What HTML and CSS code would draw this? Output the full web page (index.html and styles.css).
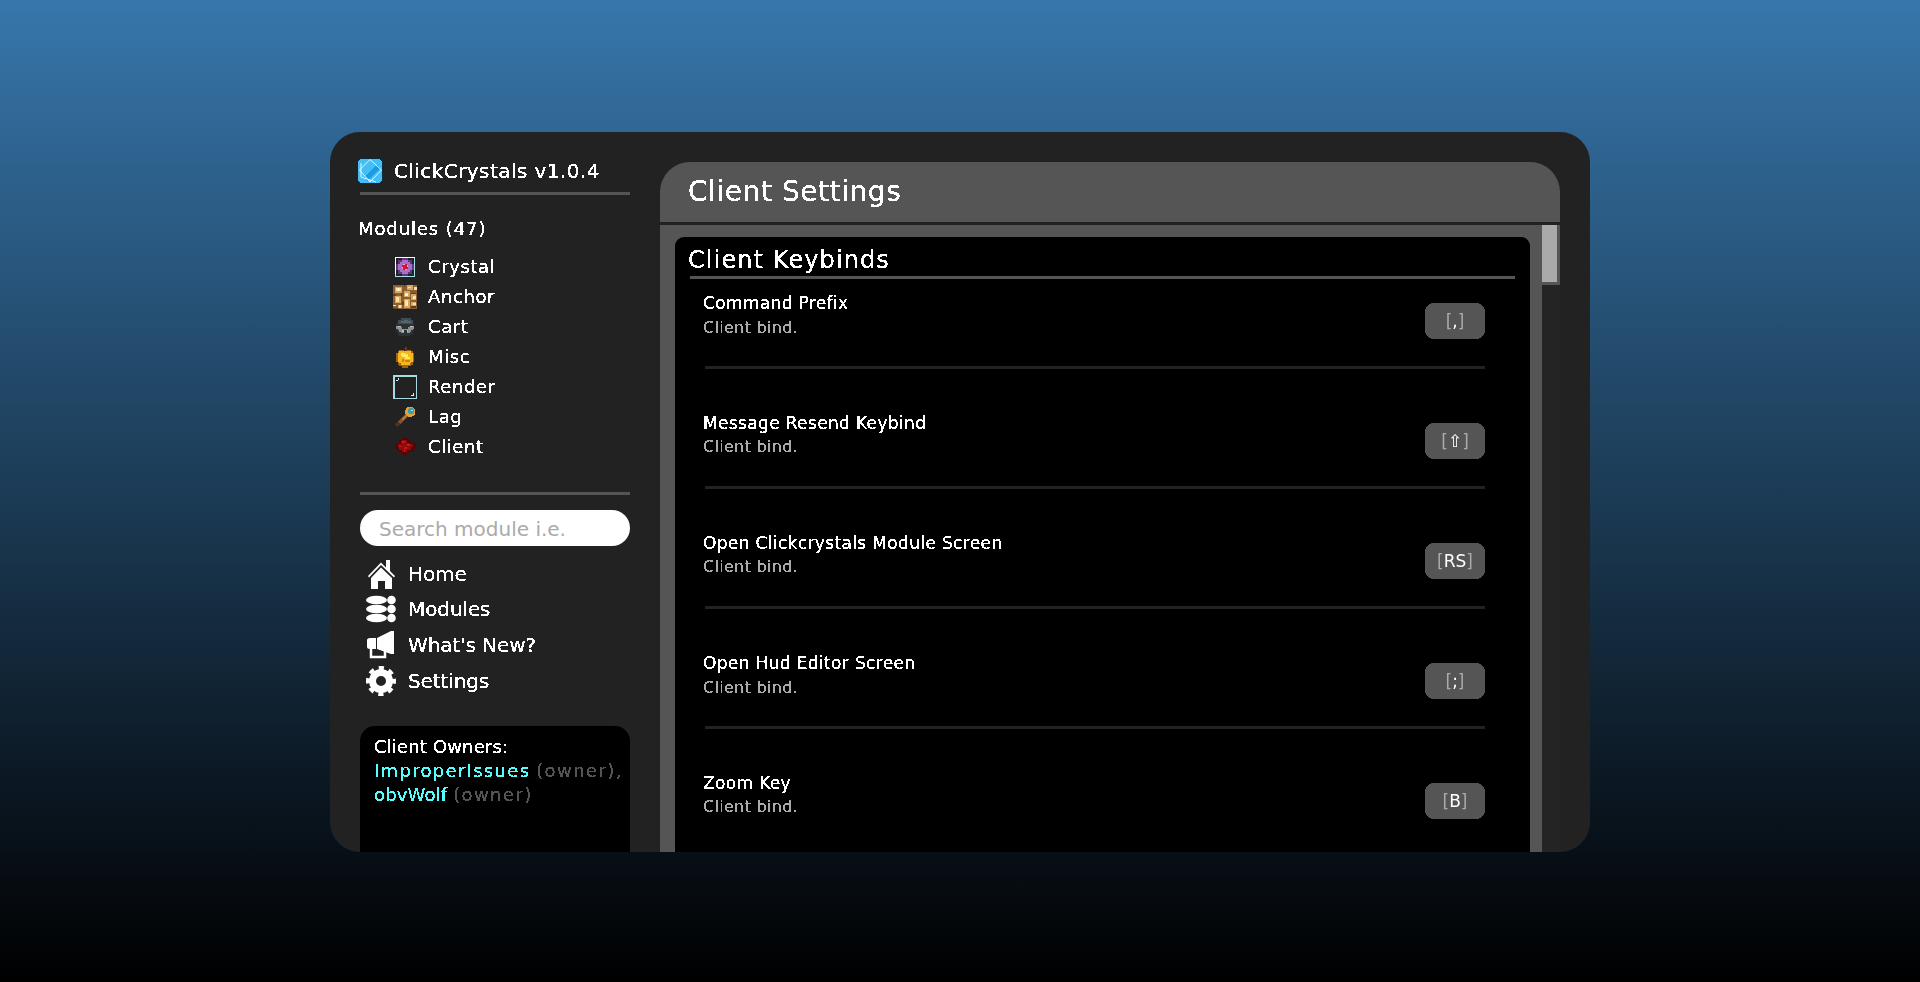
FILE: index.html
```html
<!DOCTYPE html>
<html lang="en">
<head>
    <meta charset="UTF-8">
    <meta name="viewport" content="width=device-width, initial-scale=1.0">
    <title>ClickCrystals</title>
    <link rel="stylesheet" href="styles.css">
</head>
<body>
    <!-- hard edge on the text, the original uses a bitmap font -->
    <svg class="defs" width="0" height="0">
        <filter id="crisp" color-interpolation-filters="sRGB" x="0" y="0" width="100%" height="100%">
            <feComponentTransfer>
                <feFuncA type="discrete" tableValues="0 1 1"/>
            </feComponentTransfer>
        </filter>
    </svg>

    <div class="window">
        <aside class="sidebar">
            <div class="brand">
                <svg class="logo" viewBox="0 0 26 26" shape-rendering="crispEdges">
                    <path fill="#0c2a3c" d="M2 0h22v1h1v1h1v22h-1v1h-1v1H2v-1H1v-1H0V2h1V1h1z"/>
                    <path fill="#45bdf5" d="M3 1h20v1h1v1h1v20h-1v1h-1v1H3v-1H2v-1H1V3h1V2h1z"/>
                    <path fill="#1b9ae6" d="M7 19L20 6l3 4-13 13z"/>
                    <path fill="none" stroke="#e4f8ff" stroke-width="1" shape-rendering="auto" d="M13 1.500L24.500 12 13 24 2.500 12zM4 5v14l15 5"/>
                </svg>
                <span class="brand-name">ClickCrystals v1.0.4</span>
            </div>
            <hr class="rule">

            <div class="modules-head">Modules (47)</div>
            <ul class="module-list">
                <li>
                    <svg class="module-icon" viewBox="1 1 14 14" shape-rendering="crispEdges">
                        <path fill="#5c3580" d="M6 3h4v1h2v2h1v4h-1v2h-2v1H6v-1H4v-2H3V6h1V4h2z"/>
                        <path fill="#a76fc8" d="M6 4h4v1h1v1h1v4h-1v1h-1v1H6v-1H5v-1H4V6h1V5h1z"/>
                        <path fill="#d9a6ea" d="M7 6h2v1h1v2H9v1H7V9H6V7h1z"/>
                        <path fill="#d3142c" d="M8 6h1v2h1v1H8v1H7V8H6V7h2z"/>
                        <path fill="#ffffff" d="M2 2h12v1H3v1H2z"/>
                        <path fill="#ffffff" d="M2 4h1v8H2z"/>
                        <path fill="#a9dbe4" d="M13 3h1v11H2v-2h1v1h10z"/>
                    </svg>
                    <span>Crystal</span>
                </li>
                <li>
                    <svg class="module-icon" viewBox="0 0 16 16" shape-rendering="crispEdges">
                        <rect width="16" height="16" fill="#8a5f35"/>
                        <path fill="#5e3e20" d="M0 6h2v1H0zM7 0h1v1H7zM5 5h1v2H5zM12 5h3v1h-3zM6 11h1v2H6zM12 14h3v1h-3zM0 15h3v1H0zM14 11h2v1h-2z"/>
                        <path fill="#d8a760" d="M1 1h5v4H1zM9 0h4v3H9zM7 4h4v4H7zM12 6h3v4h-3zM1 7h4v5H1zM7 9h4v6H7zM12 11h3v3h-3zM3 13h3v2H3z"/>
                        <path fill="#ffdf9e" d="M2 2h3v2H2zM10 1h2v1h-2zM8 5h2v2H8zM13 7h2v2h-2zM2 8h2v3H2zM8 10h2v4H8zM13 12h2v1h-2zM4 13h1v2H4zM14 1h2v2h-2zM0 13h2v1H0z"/>
                        <path fill="#fff8e0" d="M3 2h1v2H3zM8 6h2v1H8zM13 8h1v1h-1zM3 9h1v1H3zM9 11h1v2H9z"/>
                    </svg>
                    <span>Anchor</span>
                </li>
                <li>
                    <svg class="module-icon" viewBox="0 0 16 16" shape-rendering="crispEdges">
                        <path fill="#2b3236" d="M5 2h7v1h1v2h1v6h-1v2h-2v1H4v-1H3v-2H2V5h1V3h2z"/>
                        <path fill="#414b51" d="M5 2h7v1h1v3H3V3h2z"/>
                        <path fill="#596469" d="M7 3h3v1h2v1H5V4h2z"/>
                        <path fill="#8f8f8f" d="M2 7h3v1h1v1h4V8h1V7h3v2h-1v1h-1v1h-1v1H9v-2H7v2H5v-1H4v-1H3V9H2z"/>
                        <path fill="#bdbdbd" d="M3 7h2v1H3zM11 7h2v1h-2zM6 10h1v1H6zM9 10h1v1H9z"/>
                    </svg>
                    <span>Cart</span>
                </li>
                <li>
                    <svg class="module-icon" viewBox="0 0 16 16" shape-rendering="crispEdges">
                        <path fill="#6a3d10" d="M8 1h1v3H8z"/>
                        <path fill="#a8620f" d="M4 3h3v1h2V3h3v1h1v1h1v6h-1v2h-1v1h-2v1H6v-1H4v-1H3v-2H2V5h1V4h1z"/>
                        <path fill="#f3b81f" d="M4 4h8v1h1v6h-1v1h-1v1H5v-1H4v-1H3V5h1z"/>
                        <path fill="#ffe85e" d="M5 5h3v1h2v2h1v1H8V8H6V7H5z"/>
                        <path fill="#c98412" d="M8 10h3v1H8zM6 9h1v2H6z"/>
                    </svg>
                    <span>Misc</span>
                </li>
                <li>
                    <svg class="module-icon" viewBox="0 0 16 16" shape-rendering="crispEdges">
                        <path fill="#a9d9e2" d="M0 0h16v16H0zM1 1v14h14V1z"/>
                        <path fill="#d8f0f4" d="M2 3h1v1H2zM3 2h1v1H3zM13 12h1v2h-2v-1h1z"/>
                    </svg>
                    <span>Render</span>
                </li>
                <li>
                    <svg class="module-icon" viewBox="0 0 16 16" shape-rendering="crispEdges">
                        <path fill="none" stroke="#8a4f28" stroke-width="2.500" d="M2 14L9 7"/>
                        <path fill="none" stroke="#55301c" stroke-width="2.500" d="M2 14l2-2"/>
                        <path fill="none" stroke="#bb7334" stroke-width="1.500" d="M6 10l3-3"/>
                        <circle cx="11.500" cy="4.500" r="3.500" fill="#e0a040"/>
                        <circle cx="12" cy="4" r="2" fill="#3aa0a8"/>
                        <path fill="#9ae8e8" d="M12 3h1v1h-1z"/>
                    </svg>
                    <span>Lag</span>
                </li>
                <li>
                    <svg class="module-icon" viewBox="0 0 16 16" shape-rendering="crispEdges">
                        <path fill="#4c0808" d="M6 2h4v1h2v2h2v1h1v3h-1v2h-3v1H9v1H6v-1H4v-1H3V9H1V6h2V5h1V3h2z"/>
                        <path fill="#8e0c0c" d="M6 3h3v2h2v1h2v2h-1v2H9v1H6v-1H4V8H3V6h2V4h1z"/>
                        <path fill="#c81818" d="M6 4h2v1H6zM9 6h2v1H9zM4 7h2v1H4zM7 8h2v1H7zM7 10h1v1H7z"/>
                    </svg>
                    <span>Client</span>
                </li>
            </ul>
            <hr class="rule">

            <input class="search" type="text" placeholder="Search module i.e.">

            <nav class="nav">
                <a class="nav-item">
                    <svg class="nav-icon" viewBox="0 0 30 30">
                        <path fill="#fff" d="M20 1h4v11l5 5-1 1.500L15 6 3 18.500 2 17 15 3.500l5 5z"/>
                        <path fill="#fff" d="M15 8.500L26 19v11h-7v-8h-7v8H5V19z"/>
                    </svg>
                    <span>Home</span>
                </a>
                <a class="nav-item">
                    <svg class="nav-icon" viewBox="0 0 30 30">
                        <ellipse cx="10.500" cy="6" rx="10.500" ry="4.300" fill="#fff"/>
                        <ellipse cx="10.500" cy="15" rx="10.500" ry="4.300" fill="#fff"/>
                        <ellipse cx="10.500" cy="24" rx="10.500" ry="4.300" fill="#fff"/>
                        <circle cx="25.500" cy="6" r="4.300" fill="#fff"/>
                        <circle cx="25.500" cy="15" r="4.300" fill="#fff"/>
                        <circle cx="25.500" cy="24" r="4.300" fill="#fff"/>
                    </svg>
                    <span>Modules</span>
                </a>
                <a class="nav-item">
                    <svg class="nav-icon" viewBox="0 0 30 30">
                        <path fill="#fff" d="M11 8L25 1h3v23h-3l-14-5z"/>
                        <path fill="#fff" d="M4 8h6v11H4c-2 0-3-1-3-2v-7c0-1 1-2 3-2z"/>
                        <path fill="none" stroke="#fff" stroke-width="2.500" d="M5 19v8h14v-6"/>
                    </svg>
                    <span>What's New?</span>
                </a>
                <a class="nav-item">
                    <svg class="nav-icon" viewBox="0 0 30 30">
                        <circle cx="15" cy="15" r="8.500" fill="none" stroke="#fff" stroke-width="7"/>
                        <circle cx="15" cy="15" r="13" fill="none" stroke="#fff" stroke-width="4" stroke-dasharray="5.200 5" stroke-dashoffset="2.600"/>
                    </svg>
                    <span>Settings</span>
                </a>
            </nav>

            <div class="owners">
                <div class="owners-text">Client Owners:</div>
                <div class="owners-text"><span class="owner-name owner-long">ImproperIssues</span> <span class="owner-role">(owner),</span></div>
                <div class="owners-text"><span class="owner-name">obvWolf</span> <span class="owner-role">(owner)</span></div>
            </div>
        </aside>

        <main class="main">
            <header class="main-head">
                <h1>Client Settings</h1>
            </header>
            <div class="main-body">
                <section class="card">
                    <h2>Client Keybinds</h2>
                    <hr class="rule card-rule">

                    <div class="bind-row">
                        <div class="bind-text">
                            <div class="bind-name">Command Prefix</div>
                            <div class="bind-desc">Client bind.</div>
                        </div>
                        <button class="key"><i>[</i>,<i>]</i></button>
                    </div>
                    <div class="bind-row bind-row-tight">
                        <div class="bind-text">
                            <div class="bind-name">Message Resend Keybind</div>
                            <div class="bind-desc">Client bind.</div>
                        </div>
                        <button class="key"><i>[</i>⇧<i>]</i></button>
                    </div>
                    <div class="bind-row bind-row-tight">
                        <div class="bind-text">
                            <div class="bind-name">Open Clickcrystals Module Screen</div>
                            <div class="bind-desc">Client bind.</div>
                        </div>
                        <button class="key"><i>[</i>RS<i>]</i></button>
                    </div>
                    <div class="bind-row">
                        <div class="bind-text">
                            <div class="bind-name">Open Hud Editor Screen</div>
                            <div class="bind-desc">Client bind.</div>
                        </div>
                        <button class="key"><i>[</i>;<i>]</i></button>
                    </div>
                    <div class="bind-row bind-row-tight">
                        <div class="bind-text">
                            <div class="bind-name">Zoom Key</div>
                            <div class="bind-desc">Client bind.</div>
                        </div>
                        <button class="key"><i>[</i>B<i>]</i></button>
                    </div>
                </section>
                <div class="scrollbar">
                    <div class="thumb"></div>
                </div>
            </div>
        </main>
    </div>
</body>
</html>
```

FILE: styles.css
```css
* {
    box-sizing: border-box;
}

body {
    margin: 0;
    height: 982px;
    padding-top: 132px;
    overflow: hidden;
    font-family: "DejaVu Sans", sans-serif;
    color: #fff;
    background: linear-gradient(#3776ab, #000);
}

.defs {
    position: absolute;
}

.window {
    display: flex;
    gap: 30px;
    width: 1260px;
    height: 720px;
    margin: 0 auto;
    padding: 0 30px;
    background-color: #222;
    border-radius: 30px;
    overflow: hidden;
}

.sidebar {
    display: flex;
    flex-direction: column;
    flex: none;
    width: 270px;
}

.rule {
    flex: none;
    width: 100%;
    height: 3px;
    margin: 0;
    border: none;
    background-color: #555;
}

.brand {
    display: flex;
    align-items: center;
    gap: 11px;
    height: 30px;
    margin: 24px 0 6px -3px;
}

.logo {
    width: 26px;
    height: 26px;
}

.brand-name,
.modules-head,
.module-list span,
.nav-item span,
.owners-text,
.main-head h1,
.card h2,
.bind-name,
.bind-desc,
.key {
    filter: url(#crisp);
}

.brand-name {
    font-size: 20px;
    letter-spacing: 0.43px;
    white-space: nowrap;
}

.modules-head {
    height: 30px;
    margin: 19px 0 8px -2px;
    font-size: 18px;
    letter-spacing: 0.9px;
    line-height: 30px;
}

.module-list {
    list-style-type: none;
    margin: 0 0 30px;
    padding: 0 0 0 33px;
}

.module-list li {
    display: flex;
    align-items: center;
    gap: 11px;
    height: 30px;
    font-size: 18px;
    letter-spacing: 0.6px;
}

.module-list span {
    margin-top: -1px;
}

.module-icon {
    flex: none;
    width: 24px;
    height: 24px;
}

.search {
    flex: none;
    width: 100%;
    height: 36px;
    margin-top: 15px;
    padding: 2px 19px 0;
    border: none;
    border-radius: 18px;
    background-color: #fff;
    font-family: inherit;
    font-size: 20px;
    outline: none;
}

.search::placeholder {
    color: #aaa;
}

.nav {
    margin-top: 10px;
}

.nav-item {
    display: flex;
    align-items: center;
    gap: 12px;
    height: 35.6px;
    padding-left: 6px;
    font-size: 20px;
    letter-spacing: -0.1px;
}

.nav-icon {
    flex: none;
    width: 30px;
    height: 30px;
}

.owners {
    flex: 1;
    margin-top: 27.6px;
    padding: 9px 14px;
    background-color: #000;
    border-radius: 15px 15px 0 0;
}

.owners-text {
    height: 24px;
    font-size: 18px;
    letter-spacing: 0.15px;
    line-height: 24px;
    white-space: nowrap;
}

.owner-name {
    color: #55ffff;
}

.owner-long {
    letter-spacing: 1.3px;
}

.owner-role {
    color: #555;
    letter-spacing: 1.4px;
}

.main {
    display: flex;
    flex-direction: column;
    flex: none;
    width: 900px;
    margin-top: 30px;
}

.main-head {
    flex: none;
    height: 63px;
    padding-left: 28px;
    background-color: #555;
    border-bottom: 3px solid #222;
    border-radius: 30px 30px 0 0;
}

.main-head h1 {
    margin: 0;
    font-size: 28px;
    font-weight: normal;
    letter-spacing: 0.57px;
    line-height: 60px;
}

.main-body {
    display: flex;
    flex: 1;
    min-height: 0;
    padding-left: 15px;
    background-color: #555;
}

.card {
    flex: none;
    width: 855px;
    height: 720px;
    margin-top: 12px;
    padding: 0 15px;
    background-color: #000;
    border-radius: 9px 9px 0 0;
}

.card h2 {
    height: 39px;
    margin: 0 0 0 -2px;
    font-size: 24px;
    font-weight: normal;
    letter-spacing: 1.1px;
    line-height: 47px;
}

.bind-row {
    display: flex;
    justify-content: space-between;
    margin: 0 30px 0 15px;
    padding: 54px 0 27px;
    border-bottom: 3px solid #222;
}

.bind-row:last-child {
    border-bottom: none;
}

.card-rule + .bind-row {
    padding-top: 24px;
}

.bind-text {
    margin: -11px 0 0 -2px;
}

.bind-name {
    height: 22px;
    font-size: 17px;
    letter-spacing: 0.35px;
    line-height: 22px;
}

.bind-desc {
    height: 22px;
    margin-top: 3px;
    font-size: 16px;
    letter-spacing: 0.3px;
    line-height: 22px;
    color: #aaa;
}

.bind-row-tight .bind-desc {
    margin-top: 2px;
}

.key {
    flex: none;
    width: 60px;
    height: 36px;
    padding: 0;
    border: none;
    border-radius: 9px;
    background-color: #555;
    font-family: inherit;
    font-size: 17px;
    color: #fff;
}

.key i {
    font-style: normal;
    color: #aaa;
}

.scrollbar {
    flex: none;
    width: 18px;
    margin-left: 12px;
    background-color: #242424;
}

.thumb {
    height: 60px;
    background-color: #aaa;
    border-right: 3px solid #555;
    border-bottom: 3px solid #555;
}
```
